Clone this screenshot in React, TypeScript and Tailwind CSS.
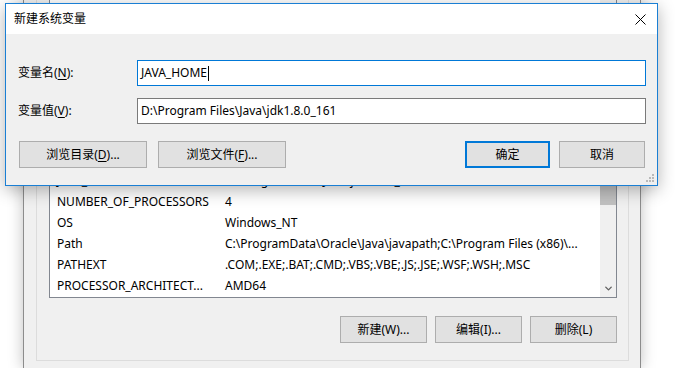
import { ChevronDown } from "lucide-react";

const rows: [string, string][] = [
  ["JAVA_HOME", "D:\\Program Files\\Java\\jdk1.8.0_161"],
  ["NUMBER_OF_PROCESSORS", "4"],
  ["OS", "Windows_NT"],
  ["Path", "C:\\ProgramData\\Oracle\\Java\\javapath;C:\\Program Files (x86)\\..."],
  ["PATHEXT", ".COM;.EXE;.BAT;.CMD;.VBS;.VBE;.JS;.JSE;.WSF;.WSH;.MSC"],
  ["PROCESSOR_ARCHITECT...", "AMD64"],
];

function WinButton({ children, primary = false, className = "" }: { children: React.ReactNode; primary?: boolean; className?: string }) {
  return (
    <div
      className={`flex h-[27px] items-center justify-center bg-[#e1e1e1] text-[12px] text-black ${
        primary ? "border-2 border-[#0078d7]" : "border border-[#adadad]"
      } ${className}`}
    >
      {children}
    </div>
  );
}

function BackWindow() {
  return (
    <div className="absolute top-0 bottom-0 left-[23px] w-[618px] border-x border-[#8c8c8c] bg-[#f0f0f0] shadow-[0_0_14px_rgba(0,0,0,0.25)]">
      {/* group box */}
      <div className="ml-[12px] mr-[11px] flex h-[361px] flex-col border-x border-b border-[#dcdcdc] pl-[12px] pr-[11px]">
        {/* list */}
        <div className="flex h-[298px] border-x border-b border-[#828790] bg-white">
          <div className="flex flex-1 flex-col justify-end pb-[1px] pl-[7px]">
            {rows.map(([name, value]) => (
              <div key={name} className="flex h-[21px] items-center whitespace-nowrap text-[12px] text-black">
                <span className="w-[168px]">{name}</span>
                <span>{value}</span>
              </div>
            ))}
          </div>
          <div className="flex w-[16px] flex-col bg-[#f0f0f0]">
            <div className="mt-[150px] h-[55px] bg-[#c1c1c1]" />
            <div className="flex-1" />
            <div className="flex h-[17px] items-center justify-center text-[#606060]">
              <ChevronDown size={11} strokeWidth={3} />
            </div>
          </div>
        </div>
        {/* buttons */}
        <div className="mt-[18px] flex justify-end gap-[8px]">
          <WinButton className="w-[87px]">新建(W)...</WinButton>
          <WinButton className="w-[87px]">编辑(I)...</WinButton>
          <WinButton className="w-[87px]">删除(L)</WinButton>
        </div>
      </div>
    </div>
  );
}

function Dialog() {
  return (
    <div className="absolute top-[3px] left-[5px] flex h-[183px] w-[653px] flex-col border border-[#1a7fd4] bg-[#f0f0f0] shadow-[0_4px_16px_rgba(0,0,0,0.3)]">
      {/* title bar */}
      <div className="flex h-[30px] items-center justify-between bg-white pr-[11px] pl-[8px] text-[12px] text-black">
        <span>新建系统变量</span>
        <svg width="11" height="11" viewBox="0 0 11 11">
          <path d="M0.5 0.5 L10.5 10.5 M10.5 0.5 L0.5 10.5" stroke="#000" strokeWidth="1" />
        </svg>
      </div>
      {/* body */}
      <div className="relative flex flex-1 flex-col pt-[26px] pr-[11px] pl-[12px] text-[12px] text-black">
        <div className="flex h-[26px] items-center">
          <span className="w-[119px]">
            变量名(<span className="underline underline-offset-2">N</span>):
          </span>
          <div className="flex h-full flex-1 items-center border border-[#0078d7] bg-white pl-[3px]">
            JAVA_HOME<span className="ml-[1px] h-[15px] w-[1px] bg-black" />
          </div>
        </div>
        <div className="mt-[12px] flex h-[26px] items-center">
          <span className="w-[119px]">
            变量值(<span className="underline underline-offset-2">V</span>):
          </span>
          <div className="flex h-full flex-1 items-center border border-[#7a7a7a] bg-white pl-[3px]">
            D:\Program Files\Java\jdk1.8.0_161
          </div>
        </div>
        <div className="mt-[17px] flex items-center pl-[1px] pr-[1px]">
          <WinButton className="w-[128px]">
            浏览目录(<span className="underline underline-offset-2">D</span>)...
          </WinButton>
          <WinButton className="ml-[11px] w-[128px]">
            浏览文件(<span className="underline underline-offset-2">F</span>)...
          </WinButton>
          <div className="flex-1" />
          <WinButton primary className="w-[85px]">确定</WinButton>
          <WinButton className="ml-[9px] w-[86px]">取消</WinButton>
        </div>
        {/* resize grip */}
        <svg className="absolute right-[2px] bottom-[2px]" width="9" height="9" viewBox="0 0 9 9" fill="#b9b9b9">
          <rect x="6" y="0" width="2" height="2" />
          <rect x="3" y="3" width="2" height="2" />
          <rect x="6" y="3" width="2" height="2" />
          <rect x="0" y="6" width="2" height="2" />
          <rect x="3" y="6" width="2" height="2" />
          <rect x="6" y="6" width="2" height="2" />
        </svg>
      </div>
    </div>
  );
}

export default function App() {
  return (
    <div
      className="relative h-[368px] w-[675px] overflow-hidden bg-white"
      style={{ fontFamily: '"Noto Sans", "Noto Sans CJK SC", sans-serif' }}
    >
      <BackWindow />
      <Dialog />
    </div>
  );
}
